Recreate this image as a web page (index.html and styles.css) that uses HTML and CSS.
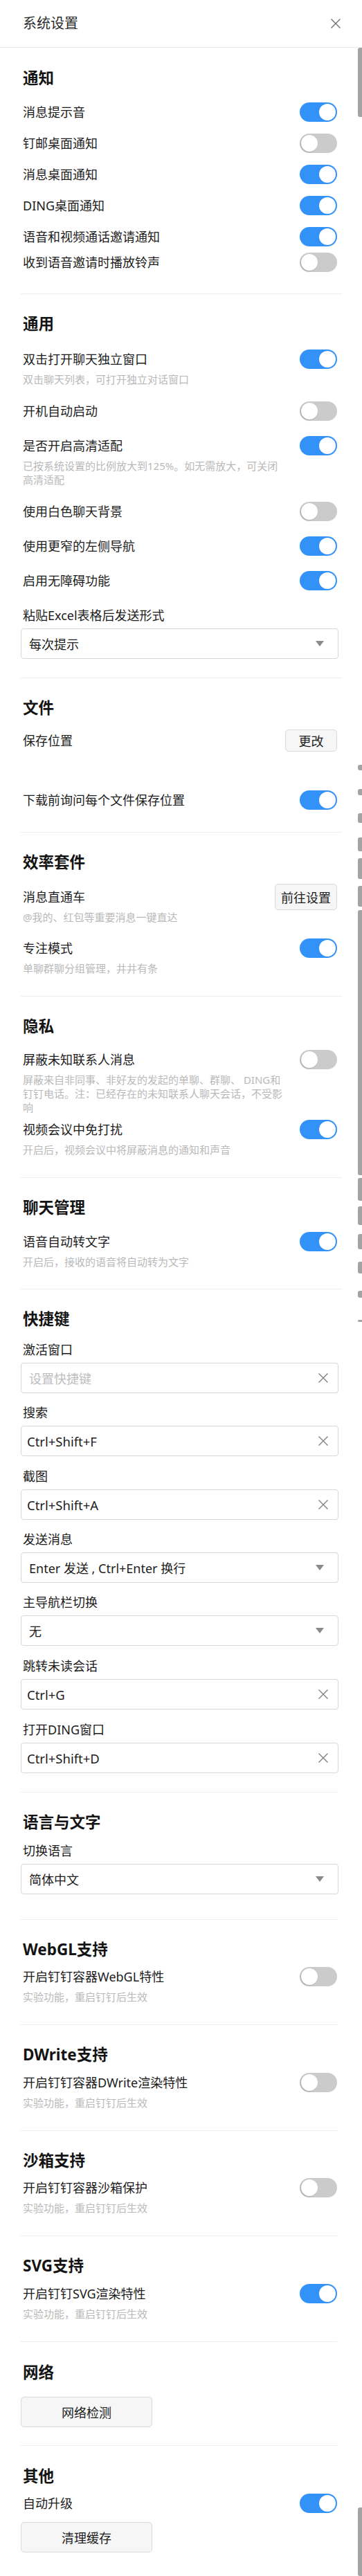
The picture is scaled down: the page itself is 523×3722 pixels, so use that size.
FILE: index.html
```html
<!DOCTYPE html>
<html lang="zh-CN">
<head>
<meta charset="utf-8">
<title>系统设置</title>
<link rel="stylesheet" href="styles.css">
</head>
<body>
<div class="page">
  <header class="header">
    <div class="title">系统设置</div>
    <svg class="close" width="16" height="16" viewBox="0 0 16 16"><path d="M1.5 1.5 L14.5 14.5 M14.5 1.5 L1.5 14.5" stroke="#6b6b6b" stroke-width="1.3" fill="none"/></svg>
  </header>

  <section class="section pt-29 pb-31">
    <h2 class="section-title mb-20">通知</h2>
    <div class="item"><div class="main"><div class="label">消息提示音</div></div><span class="toggle"></span></div>
    <div class="item mt-17"><div class="main"><div class="label">钉邮桌面通知</div></div><span class="toggle off"></span></div>
    <div class="item mt-17"><div class="main"><div class="label">消息桌面通知</div></div><span class="toggle"></span></div>
    <div class="item mt-17"><div class="main"><div class="label">DING桌面通知</div></div><span class="toggle"></span></div>
    <div class="item mt-17"><div class="main"><div class="label">语音和视频通话邀请通知</div></div><span class="toggle"></span></div>
    <div class="item mt-9"><div class="main"><div class="label">收到语音邀请时播放铃声</div></div><span class="toggle off"></span></div>
  </section>

  <section class="section pt-28 pb-27">
    <h2 class="section-title mb-22">通用</h2>
    <div class="item"><div class="main"><div class="label">双击打开聊天独立窗口</div><div class="desc">双击聊天列表，可打开独立对话窗口</div></div><span class="toggle"></span></div>
    <div class="item mt-22"><div class="main"><div class="label">开机自动启动</div></div><span class="toggle off"></span></div>
    <div class="item mt-22"><div class="main"><div class="label">是否开启高清适配</div><div class="desc">已按系统设置的比例放大到125%。如无需放大，可关闭<br>高清适配</div></div><span class="toggle"></span></div>
    <div class="item mt-22"><div class="main"><div class="label">使用白色聊天背景</div></div><span class="toggle off"></span></div>
    <div class="item mt-22"><div class="main"><div class="label">使用更窄的左侧导航</div></div><span class="toggle"></span></div>
    <div class="item mt-22"><div class="main"><div class="label">启用无障碍功能</div></div><span class="toggle"></span></div>
    <div class="field mt-22">
      <div class="label">粘贴Excel表格后发送形式</div>
      <div class="box select"><span class="value">每次提示</span><span class="caret"></span></div>
    </div>
  </section>

  <section class="section pt-28 pb-32">
    <h2 class="section-title mb-18">文件</h2>
    <div class="item"><div class="main"><div class="label">保存位置</div></div><span class="ctrl"><span class="btn btn-sm">更改</span></span></div>
    <div class="item mt-58"><div class="main"><div class="label">下载前询问每个文件保存位置</div></div><span class="toggle"></span></div>
  </section>

  <section class="section pt-28 pb-30">
    <h2 class="section-title mb-21">效率套件</h2>
    <div class="item"><div class="main"><div class="label">消息直通车</div><div class="desc">@我的、红包等重要消息一键直达</div></div><span class="ctrl"><span class="btn btn-md">前往设置</span></span></div>
    <div class="item mt-21"><div class="main"><div class="label">专注模式</div><div class="desc">单聊群聊分组管理，井井有条</div></div><span class="toggle"></span></div>
  </section>

  <section class="section pt-28 pb-30">
    <h2 class="section-title mb-19">隐私</h2>
    <div class="item"><div class="main"><div class="label">屏蔽未知联系人消息</div><div class="desc">屏蔽来自非同事、非好友的发起的单聊、群聊、 DING和<br>钉钉电话。注：已经存在的未知联系人聊天会话，不受影<br>响</div></div><span class="toggle off"></span></div>
    <div class="item mt-8"><div class="main"><div class="label">视频会议中免打扰</div><div class="desc">开启后，视频会议中将屏蔽消息的通知和声音</div></div><span class="toggle"></span></div>
  </section>

  <section class="section pt-28 pb-29">
    <h2 class="section-title mb-20">聊天管理</h2>
    <div class="item"><div class="main"><div class="label">语音自动转文字</div><div class="desc">开启后，接收的语音将自动转为文字</div></div><span class="toggle"></span></div>
  </section>

  <section class="section narrow pt-28 pb-27">
    <h2 class="section-title mb-15">快捷键</h2>
    <div class="field">
      <div class="label">激活窗口</div>
      <div class="box"><span class="placeholder">设置快捷键</span><svg class="clear" width="16" height="16" viewBox="0 0 16 16"><path d="M1.5 1.5 L14.5 14.5 M14.5 1.5 L1.5 14.5" stroke="#808080" stroke-width="1.4" fill="none"/></svg></div>
    </div>
    <div class="field mt-14">
      <div class="label">搜索</div>
      <div class="box"><span class="keys">Ctrl+Shift+F</span><svg class="clear" width="16" height="16" viewBox="0 0 16 16"><path d="M1.5 1.5 L14.5 14.5 M14.5 1.5 L1.5 14.5" stroke="#808080" stroke-width="1.4" fill="none"/></svg></div>
    </div>
    <div class="field mt-15">
      <div class="label">截图</div>
      <div class="box"><span class="keys">Ctrl+Shift+A</span><svg class="clear" width="16" height="16" viewBox="0 0 16 16"><path d="M1.5 1.5 L14.5 14.5 M14.5 1.5 L1.5 14.5" stroke="#808080" stroke-width="1.4" fill="none"/></svg></div>
    </div>
    <div class="field mt-14">
      <div class="label">发送消息</div>
      <div class="box select"><span class="value">Enter 发送 , Ctrl+Enter 换行</span><span class="caret"></span></div>
    </div>
    <div class="field mt-14">
      <div class="label">主导航栏切换</div>
      <div class="box select"><span class="value">无</span><span class="caret"></span></div>
    </div>
    <div class="field mt-15">
      <div class="label">跳转未读会话</div>
      <div class="box"><span class="keys">Ctrl+G</span><svg class="clear" width="16" height="16" viewBox="0 0 16 16"><path d="M1.5 1.5 L14.5 14.5 M14.5 1.5 L1.5 14.5" stroke="#808080" stroke-width="1.4" fill="none"/></svg></div>
    </div>
    <div class="field mt-15">
      <div class="label">打开DING窗口</div>
      <div class="box"><span class="keys">Ctrl+Shift+D</span><svg class="clear" width="16" height="16" viewBox="0 0 16 16"><path d="M1.5 1.5 L14.5 14.5 M14.5 1.5 L1.5 14.5" stroke="#808080" stroke-width="1.4" fill="none"/></svg></div>
    </div>
  </section>

  <section class="section narrow pt-28 pb-36">
    <h2 class="section-title mb-12">语言与文字</h2>
    <div class="field">
      <div class="label">切换语言</div>
      <div class="box select"><span class="value">简体中文</span><span class="caret"></span></div>
    </div>
  </section>

  <section class="section narrow pt-28 pb-30">
    <h2 class="section-title mb-10">WebGL支持</h2>
    <div class="item"><div class="main"><div class="label">开启钉钉容器WebGL特性</div><div class="desc">实验功能，重启钉钉后生效</div></div><span class="toggle off"></span></div>
  </section>

  <section class="section narrow pt-28 pb-30">
    <h2 class="section-title mb-11">DWrite支持</h2>
    <div class="item"><div class="main"><div class="label">开启钉钉容器DWrite渲染特性</div><div class="desc">实验功能，重启钉钉后生效</div></div><span class="toggle off"></span></div>
  </section>

  <section class="section narrow pt-28 pb-30">
    <h2 class="section-title mb-10">沙箱支持</h2>
    <div class="item"><div class="main"><div class="label">开启钉钉容器沙箱保护</div><div class="desc">实验功能，重启钉钉后生效</div></div><span class="toggle off"></span></div>
  </section>

  <section class="section narrow pt-28 pb-30">
    <h2 class="section-title mb-11">SVG支持</h2>
    <div class="item"><div class="main"><div class="label">开启钉钉SVG渲染特性</div><div class="desc">实验功能，重启钉钉后生效</div></div><span class="toggle"></span></div>
  </section>

  <section class="section narrow pt-29 pb-26">
    <h2 class="section-title mb-20">网络</h2>
    <span class="btn btn-lg">网络检测</span>
  </section>

  <section class="section narrow last pt-29">
    <h2 class="section-title mb-10">其他</h2>
    <div class="item"><div class="main"><div class="label">自动升级</div></div><span class="toggle"></span></div>
    <span class="btn btn-lg mt-13">清理缓存</span>
  </section>

  <div class="scrollbar" aria-hidden="true">
    <span class="thumb" style="top:69px;height:100px"></span>
    <span class="thumb" style="top:1105px;height:8px"></span>
    <span class="thumb" style="top:1140px;height:9px"></span>
    <span class="thumb" style="top:1175px;height:14px"></span>
    <span class="thumb" style="top:1210px;height:20px"></span>
    <span class="thumb" style="top:1240px;height:30px"></span>
    <span class="thumb" style="top:1280px;height:30px"></span>
    <span class="thumb" style="top:1315px;height:383px"></span>
    <span class="thumb" style="top:1702px;height:33px"></span>
    <span class="thumb" style="top:1743px;height:27px"></span>
    <span class="thumb" style="top:1783px;height:22px"></span>
    <span class="thumb" style="top:1823px;height:17px"></span>
    <span class="thumb" style="top:1865px;height:10px"></span>
    <span class="thumb" style="top:1907px;height:3px"></span>
    <span class="thumb" style="top:3623px;height:99px"></span>
  </div>
</div>
</body>
</html>
```

FILE: styles.css
```css
* { box-sizing: border-box; margin: 0; padding: 0; }

html, body { background: #fff; }

body {
  margin: 0;
  font-family: "Noto Sans", "Noto Sans CJK SC", sans-serif;
  color: #1c1c1c;
}

.page {
  position: relative;
  width: 523px;
  min-height: 3722px;
}

.header {
  height: 69px;
  border-bottom: 1px solid #e9e9e9;
  display: flex;
  align-items: center;
  justify-content: space-between;
  padding: 0 30px 1px 33px;
}

.title {
  font-size: 20px;
  line-height: 28px;
  color: #2b2b2b;
}

.close { display: block; }

.section {
  margin-left: 30px;
  width: 464px;
  border-bottom: 1px solid #eeeeee;
}
.section.narrow { width: 457px; }
.section.last { border-bottom: none; }

.section-title {
  font-size: 22.5px;
  font-weight: 700;
  line-height: 30px;
  height: 30px;
  padding-left: 3px;
  color: #141414;
}

.item {
  display: flex;
  justify-content: space-between;
  align-items: flex-start;
  padding-left: 3px;
  padding-right: 7px;
}
.narrow .item { padding-right: 0; }

.main { max-width: 385px; }

.label {
  font-size: 18px;
  line-height: 28px;
  white-space: nowrap;
}

.desc {
  margin-top: 5px;
  font-size: 15px;
  line-height: 20px;
  color: #b9b9b9;
  white-space: nowrap;
}

.toggle {
  flex: none;
  position: relative;
  width: 54px;
  height: 28px;
  border-radius: 14px;
  background: #3292f8;
}
.toggle::after {
  content: "";
  position: absolute;
  top: 2px;
  right: 2px;
  width: 24px;
  height: 24px;
  border-radius: 50%;
  background: #fff;
}
.toggle.off { background: #cbcbcb; }
.toggle.off::after {
  right: auto;
  left: 2px;
  box-shadow: -1px 1px 2px rgba(0, 0, 0, 0.18);
}

.ctrl {
  flex: none;
  height: 28px;
  display: flex;
  align-items: center;
}

.btn {
  display: flex;
  align-items: center;
  justify-content: center;
  background: #f6f6f6;
  border: 1px solid #dadada;
  border-radius: 5px;
  font-size: 18px;
  color: #1c1c1c;
  white-space: nowrap;
}
.btn-sm { width: 75px; height: 32px; }
.btn-md { width: 90px; height: 38px; }
.btn-lg { width: 190px; height: 44px; }

.field .label { padding-left: 3px; }

.box {
  margin-top: 5px;
  width: 459px;
  height: 44px;
  border: 1px solid #d8d8d8;
  border-radius: 4px;
  display: flex;
  align-items: center;
  justify-content: space-between;
  padding: 0 13px 0 8px;
  font-size: 18px;
}
.box.select { padding: 0 20px 0 11px; }

.placeholder { color: #bdbdbd; padding-left: 3px; }
.keys { color: #1c1c1c; font-size: 18.5px; }
.value { color: #1c1c1c; }

.caret {
  width: 0;
  height: 0;
  border-left: 6px solid transparent;
  border-right: 6px solid transparent;
  border-top: 8px solid #8a8a8a;
}

.clear { display: block; }

.scrollbar {
  position: absolute;
  top: 0;
  right: 0;
  width: 6px;
  height: 100%;
}
.thumb {
  position: absolute;
  left: 0;
  width: 6px;
  background: #a3a3a3;
  border-radius: 3px 0 0 3px;
}

.pt-28 { padding-top: 28px; }
.pt-29 { padding-top: 29px; }
.pb-26 { padding-bottom: 26px; }
.pb-27 { padding-bottom: 27px; }
.pb-29 { padding-bottom: 29px; }
.pb-30 { padding-bottom: 30px; }
.pb-31 { padding-bottom: 31px; }
.pb-32 { padding-bottom: 32px; }
.pb-36 { padding-bottom: 36px; }

.mb-10 { margin-bottom: 10px; }
.mb-11 { margin-bottom: 11px; }
.mb-12 { margin-bottom: 12px; }
.mb-15 { margin-bottom: 15px; }
.mb-18 { margin-bottom: 18px; }
.mb-19 { margin-bottom: 19px; }
.mb-20 { margin-bottom: 20px; }
.mb-21 { margin-bottom: 21px; }
.mb-22 { margin-bottom: 22px; }

.mt-8 { margin-top: 8px; }
.mt-9 { margin-top: 9px; }
.mt-13 { margin-top: 13px; }
.mt-14 { margin-top: 14px; }
.mt-15 { margin-top: 15px; }
.mt-17 { margin-top: 17px; }
.mt-21 { margin-top: 21px; }
.mt-22 { margin-top: 22px; }
.mt-58 { margin-top: 58px; }
```
